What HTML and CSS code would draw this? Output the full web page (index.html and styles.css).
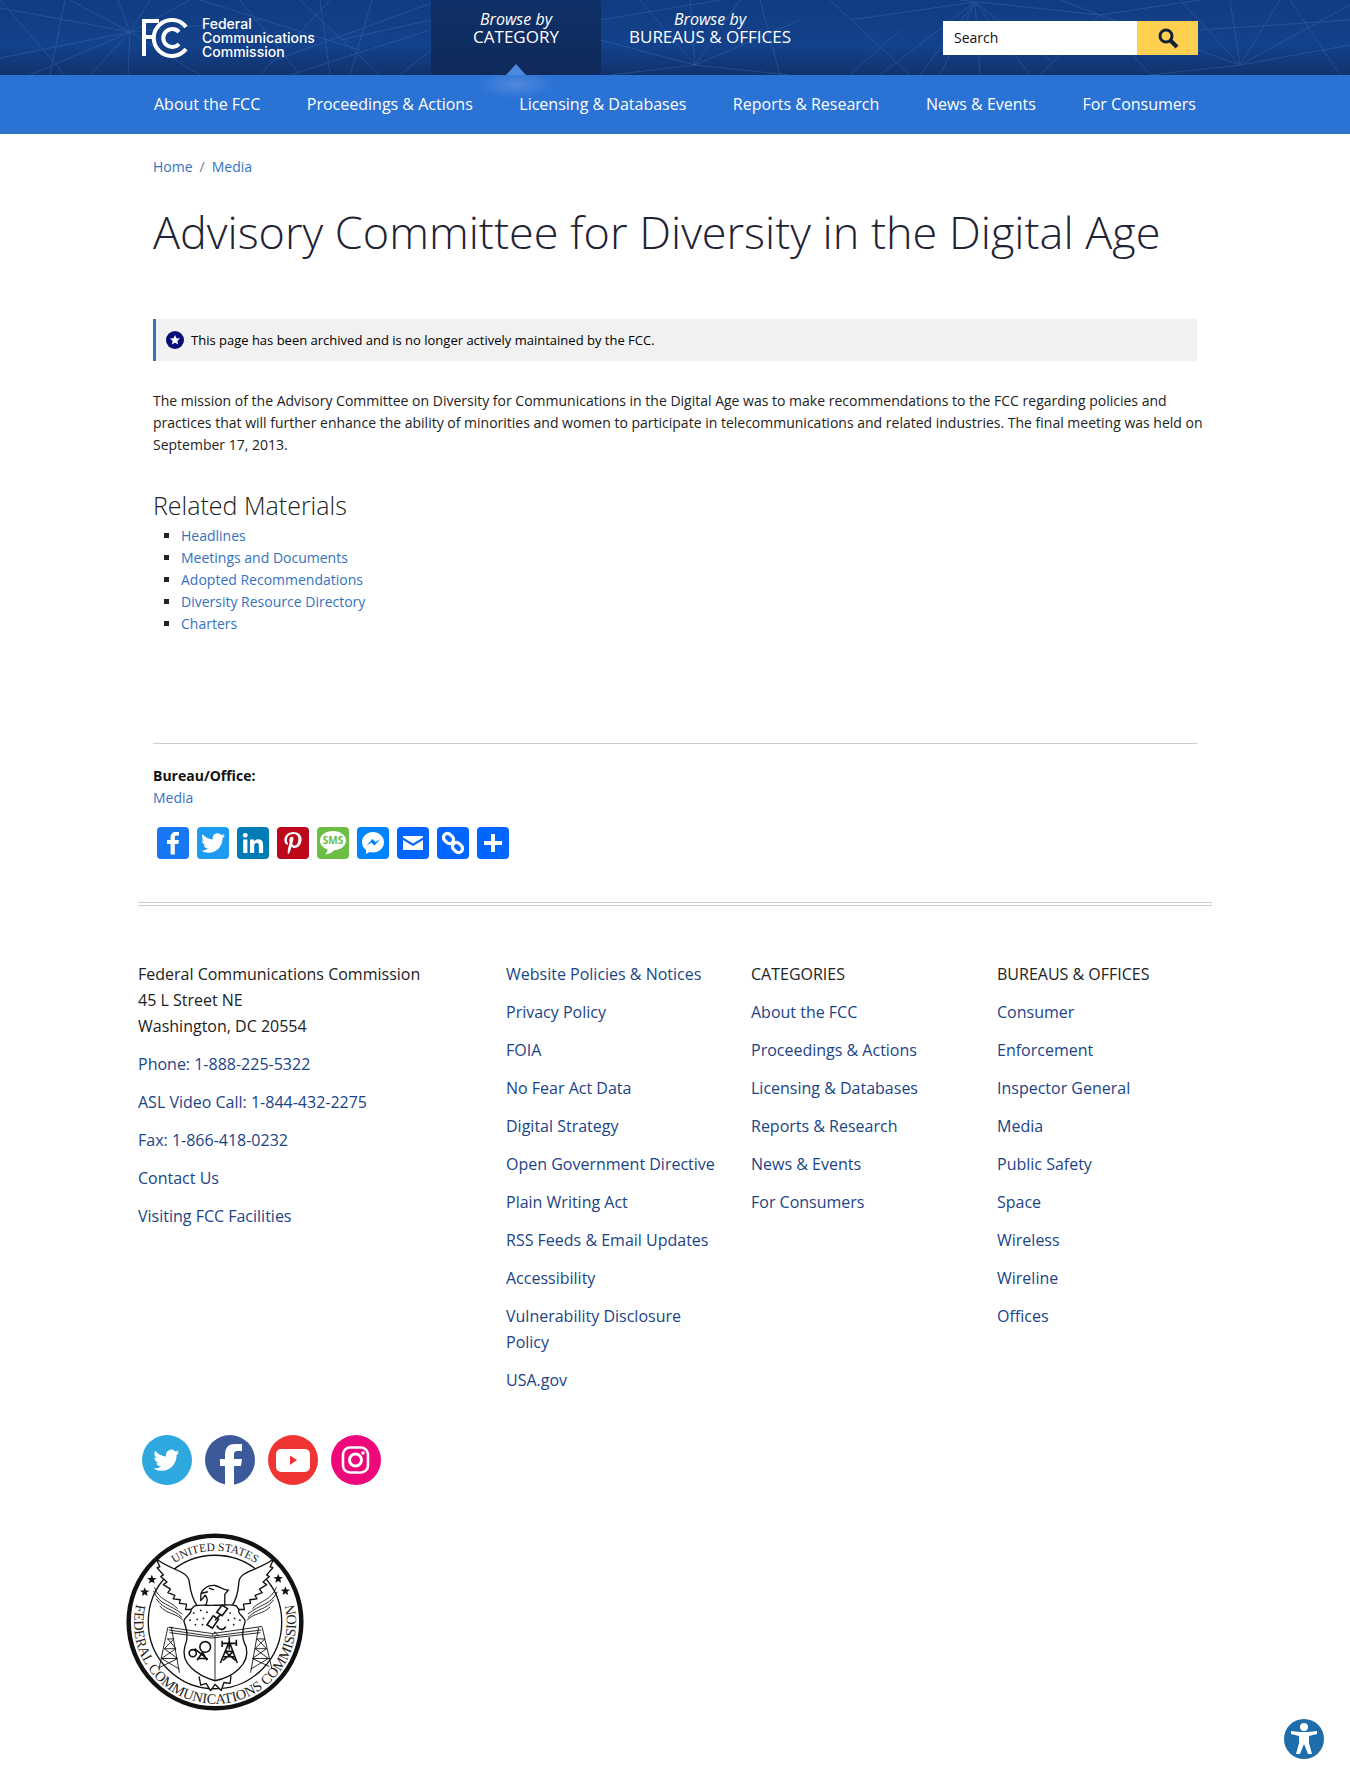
FILE: index.html
```html
<!DOCTYPE html>
<html lang="en">
<head>
<meta charset="utf-8">
<meta name="viewport" content="width=device-width, initial-scale=1">
<title>Advisory Committee for Diversity in the Digital Age | Federal Communications Commission</title>
<link rel="stylesheet" href="styles.css">
</head>
<body>
<header class="masthead">
  <svg class="masthead-pattern" viewBox="0 0 1350 75" preserveAspectRatio="xMidYMid slice" aria-hidden="true">
    <g fill="none" stroke="#5f93d6" stroke-width="1" opacity=".24">
      <path d="M130 32L0 8M130 32L0 58M130 32L30 75M130 32L90 75M130 32L128 75M130 32L70 0M130 32L118 0M130 32L150 0M130 32L200 75M130 32L260 20M130 32L190 0M0 0L65 75M65 0L50 75"/>
      <path d="M260 75L330 0M290 75L430 30M300 0L380 75M200 0L360 50M330 75L320 0M350 75L372 0M340 40L431 20M270 62L440 0M240 0L300 75M400 75L431 50"/>
      <path d="M695 65L610 75M695 65L600 40M695 65L640 0M695 65L690 0M695 65L740 0M695 65L800 20M695 65L790 75M975 2L880 75M975 2L920 75M975 2L940 75M975 2L980 75M975 2L1030 75M975 2L1050 60M975 2L850 20M600 20L720 0M760 0L780 75M830 0L910 75M900 30L850 75"/>
      <path d="M1100 15L1040 75M1100 15L1060 0M1100 15L1150 75M1100 15L1200 0M1100 15L1240 65M1100 15L960 0M1240 65L1180 0M1240 65L1230 0M1240 65L1280 0M1240 65L1350 5M1240 65L1350 45M1240 65L1150 75M1290 0L1340 75M1200 30L1350 20"/>
    </g>
  </svg>
  <div class="wrap masthead-row">
    <a class="logo" href="#" aria-label="Federal Communications Commission home">
      <svg class="logo-mark" viewBox="0 0 46 40" aria-hidden="true">
        <g fill="none" stroke="#fff" stroke-width="4">
          <path d="M2 38V3H17M2 19H12"/>
          <path d="M44 9A18 18 0 1 0 44 31"/>
          <path d="M37 14A9 9 0 1 0 37 26"/>
        </g>
      </svg>
      <span class="logo-text">Federal<br>Communications<br>Commission</span>
    </a>
    <div class="browse">
      <a class="browse-item browse-active" href="#"><em>Browse by</em><span>CATEGORY</span></a>
      <a class="browse-item" href="#"><em>Browse by</em><span>BUREAUS &amp; OFFICES</span></a>
    </div>
    <form class="search" role="search">
      <input class="search-input" type="text" placeholder="Search" aria-label="Search">
      <button class="search-button" type="button" aria-label="Submit search">
        <svg width="22" height="22" viewBox="0 0 22 22" aria-hidden="true"><circle cx="9" cy="9" r="6" fill="none" stroke="#14203a" stroke-width="3"/><path d="M13 13L20 20" stroke="#14203a" stroke-width="4"/></svg>
      </button>
    </form>
  </div>
</header>
<nav class="mainnav" aria-label="Main">
  <div class="wrap mainnav-row">
    <a href="#">About the FCC</a>
    <a href="#">Proceedings &amp; Actions</a>
    <a href="#">Licensing &amp; Databases</a>
    <a href="#">Reports &amp; Research</a>
    <a href="#">News &amp; Events</a>
    <a href="#">For Consumers</a>
  </div>
</nav>
<main class="wrap page">
  <div class="breadcrumb"><a href="#">Home</a><span>/</span><a href="#">Media</a></div>
  <h1>Advisory Committee for Diversity in the Digital Age</h1>
  <div class="notice">
    <svg width="18" height="18" viewBox="0 0 18 18" aria-hidden="true"><circle cx="9" cy="9" r="9" fill="#0b0b78"/><path d="M9 4L10.5 7.2L14 7.6L11.4 10L12.1 13.5L9 11.7L5.900 13.5L6.600 10L4 7.600L7.500 7.200Z" fill="#fff"/></svg>
    <span>This page has been archived and is no longer actively maintained by the FCC.</span>
  </div>
  <p class="mission">The mission of the Advisory Committee on Diversity for Communications in the Digital Age was to make recommendations to the FCC regarding policies and practices that will further enhance the ability of minorities and women to participate in telecommunications and related industries. The final meeting was held on September 17, 2013.</p>
  <h2>Related Materials</h2>
  <ul class="materials">
    <li><a href="#">Headlines</a></li>
    <li><a href="#">Meetings and Documents</a></li>
    <li><a href="#">Adopted Recommendations</a></li>
    <li><a href="#">Diversity Resource Directory</a></li>
    <li><a href="#">Charters</a></li>
  </ul>
  <section class="bureau">
    <strong>Bureau/Office:</strong>
    <a href="#">Media</a>
  </section>
  <div class="share">
    <a class="share-facebook" href="#" aria-label="Facebook"><svg viewBox="0 0 32 32"><path fill="#fff" d="M17.800 27.500V17h3.600l.500-4h-4.100v-2.500c0-1.200.300-2 2-2H22V5.100c-.400-.100-1.700-.200-3.200-.200-3.100 0-5.200 1.900-5.200 5.400V13H10v4h3.600v10.500z"/></svg></a>
    <a class="share-twitter" href="#" aria-label="Twitter"><svg viewBox="0 0 32 32"><path id="bird" fill="#fff" d="M28 8.600a9.900 9.900 0 0 1-2.800.800 4.900 4.900 0 0 0 2.200-2.700c-1 .500-2 1-3.100 1.200a4.900 4.900 0 0 0-8.400 4.500A14 14 0 0 1 5.700 7.200a4.900 4.900 0 0 0 1.500 6.600c-.800 0-1.600-.300-2.200-.600v.100a4.900 4.900 0 0 0 4 4.800 4.900 4.900 0 0 1-2.300.100 4.900 4.900 0 0 0 4.600 3.400A9.900 9.900 0 0 1 4 23.600a14 14 0 0 0 7.500 2.200c9.100 0 14-7.500 14-14v-.600A10 10 0 0 0 28 8.600z"/></svg></a>
    <a class="share-linkedin" href="#" aria-label="LinkedIn"><svg viewBox="0 0 32 32"><path fill="#fff" d="M6.200 12.600h4.200v13.500H6.200zM8.300 5.900a2.400 2.400 0 1 1 0 4.900 2.400 2.400 0 0 1 0-4.900M13 12.600h4v1.800h.100c.600-1 1.900-2.200 4-2.200 4.200 0 5 2.800 5 6.500v7.400h-4.200v-6.600c0-1.600 0-3.600-2.200-3.600s-2.500 1.700-2.500 3.500v6.700H13z"/></svg></a>
    <a class="share-pinterest" href="#" aria-label="Pinterest"><svg viewBox="0 0 32 32"><path fill="#fff" d="M16.500 5C10.500 5 7.400 9.300 7.400 12.900c0 2.200.800 4.100 2.600 4.900.300.100.600 0 .700-.300l.200-1c.100-.400.100-.500-.200-.800-.500-.600-.800-1.400-.800-2.500 0-3.200 2.400-6.100 6.200-6.100 3.400 0 5.300 2.100 5.300 4.800 0 3.600-1.600 6.700-4 6.700-1.300 0-2.300-1.100-2-2.400.400-1.600 1.100-3.300 1.100-4.500 0-1-.600-1.900-1.700-1.900-1.400 0-2.500 1.400-2.500 3.300 0 1.200.4 2 .4 2L11 22c-.500 2.100-.100 4.700 0 5 0 .100.200.200.300.100.100-.200 1.800-2.200 2.300-4.200l.9-3.500c.500.800 1.800 1.600 3.100 1.600 4.200 0 7-3.800 7-8.900C24.600 8.200 21.300 5 16.500 5z"/></svg></a>
    <a class="share-sms" href="#" aria-label="SMS"><svg viewBox="0 0 32 32"><path fill="#fff" d="M16 4c7.200 0 13 4 13 9.500S23.500 23 17 23.200c-2 2.500-5 4-9 4.300 1.500-1.500 2.500-3 2.500-5C6 21 3 17.500 3 13.500 3 8 8.800 4 16 4z"/><text x="16" y="17" text-anchor="middle" class="sms-label">SMS</text></svg></a>
    <a class="share-messenger" href="#" aria-label="Messenger"><svg viewBox="0 0 32 32"><path fill="#fff" d="M16 5C9.900 5 5 9.500 5 15.200c0 3.200 1.600 6 4 7.800V27l3.700-2c1 .300 2.100.400 3.300.400 6.100 0 11-4.500 11-10.200S22.100 5 16 5z"/><path fill="#0084ff" d="M9.500 18.500l6-6.500 3 3 5-3-6 6.500-3-3z"/></svg></a>
    <a class="share-blue" href="#" aria-label="Email"><svg viewBox="0 0 32 32"><path fill="#fff" d="M6 9h20v1.500l-10 6-10-6zM6 13l10 6 10-6v10H6z"/></svg></a>
    <a class="share-blue" href="#" aria-label="Copy Link"><svg viewBox="0 0 32 32"><g fill="none" stroke="#fff" stroke-width="3.200" stroke-linecap="round"><rect x="-5.500" y="-4" width="11" height="8" rx="4" transform="translate(11.500 11.500) rotate(45)"/><rect x="-5.500" y="-4" width="11" height="8" rx="4" transform="translate(20.500 20.500) rotate(45)"/></g></svg></a>
    <a class="share-blue" href="#" aria-label="Share"><svg viewBox="0 0 32 32"><path fill="#fff" d="M14 7h4v7h7v4h-7v7h-4v-7H7v-4h7z"/></svg></a>
  </div>
</main>
<footer class="wrap footer">
  <div class="footer-columns">
    <div class="footer-list">
      <address>Federal Communications Commission<br>45 L Street NE<br>Washington, DC 20554</address>
      <a href="#">Phone: 1-888-225-5322</a>
      <a href="#">ASL Video Call: 1-844-432-2275</a>
      <a href="#">Fax: 1-866-418-0232</a>
      <a href="#">Contact Us</a>
      <a href="#">Visiting FCC Facilities</a>
    </div>
    <div class="footer-list">
      <a href="#">Website Policies &amp; Notices</a>
      <a href="#">Privacy Policy</a>
      <a href="#">FOIA</a>
      <a href="#">No Fear Act Data</a>
      <a href="#">Digital Strategy</a>
      <a href="#">Open Government Directive</a>
      <a href="#">Plain Writing Act</a>
      <a href="#">RSS Feeds &amp; Email Updates</a>
      <a href="#">Accessibility</a>
      <a href="#">Vulnerability Disclosure Policy</a>
      <a href="#">USA.gov</a>
    </div>
    <div class="footer-list">
      <span>CATEGORIES</span>
      <a href="#">About the FCC</a>
      <a href="#">Proceedings &amp; Actions</a>
      <a href="#">Licensing &amp; Databases</a>
      <a href="#">Reports &amp; Research</a>
      <a href="#">News &amp; Events</a>
      <a href="#">For Consumers</a>
    </div>
    <div class="footer-list">
      <span>BUREAUS &amp; OFFICES</span>
      <a href="#">Consumer</a>
      <a href="#">Enforcement</a>
      <a href="#">Inspector General</a>
      <a href="#">Media</a>
      <a href="#">Public Safety</a>
      <a href="#">Space</a>
      <a href="#">Wireless</a>
      <a href="#">Wireline</a>
      <a href="#">Offices</a>
    </div>
  </div>
  <div class="social">
    <a href="#" aria-label="Twitter"><svg viewBox="0 0 50 50"><circle cx="25" cy="25" r="25" fill="#2fa8df"/><use href="#bird" transform="translate(7 8) scale(1.080)"/></svg></a>
    <a href="#" aria-label="Facebook"><svg viewBox="0 0 50 50"><circle cx="25" cy="25" r="25" fill="#3c5a9a"/><path fill="#fff" d="M20 50V31h-5v-7h5v-4c0-8 4-11 10-11h7v7h-4c-3 0-4 1-4 4v4h8l-1 7h-7v19z"/></svg></a>
    <a href="#" aria-label="YouTube"><svg viewBox="0 0 50 50"><circle cx="25" cy="25" r="25" fill="#f03434"/><rect x="8" y="14" width="34" height="23" rx="5" fill="#fff"/><path fill="#f03434" d="M22 20.500L29 25L22 30z"/></svg></a>
    <a href="#" aria-label="Instagram"><svg viewBox="0 0 50 50"><circle cx="25" cy="25" r="25" fill="#ee077b"/><g fill="none" stroke="#fff" stroke-width="2.600"><rect x="12" y="12.500" width="25" height="25" rx="7"/><circle cx="24.500" cy="25" r="6" stroke-width="3"/></g><circle cx="32" cy="18" r="1.800" fill="#fff"/></svg></a>
  </div>
  <svg class="seal" viewBox="0 0 200 200" role="img" aria-label="Seal of the Federal Communications Commission">
    <defs>
      <path id="arc-top" d="M20 100A80 80 0 0 1 180 100"/>
      <path id="arc-bottom" d="M16 66A91 91 0 1 0 184 66"/>
    </defs>
    <g fill="none" stroke="#111">
      <circle cx="100" cy="100" r="97" stroke-width="5"/>
      <circle cx="100" cy="100" r="75" stroke-width="1.500"/>
    </g>
    <g class="seal-text">
      <text class="seal-top"><textPath href="#arc-top" startOffset="50%" text-anchor="middle">UNITED STATES</textPath></text>
      <text><textPath href="#arc-bottom" startOffset="50%" text-anchor="middle">FEDERAL COMMUNICATIONS COMMISSION</textPath></text>
    </g>
    <g fill="#111">
      <path d="M29 47l1.500 3.500 3.800.200-3 2.400 1 3.700-3.300-2-3.200 2 1-3.700-3-2.400 3.800-.200z"/>
      <path d="M21 61l1.500 3.500 3.800.200-3 2.400 1 3.700-3.300-2-3.200 2 1-3.700-3-2.400 3.800-.200z"/>
      <path d="M171 46l1.500 3.500 3.800.200-3 2.400 1 3.700-3.300-2-3.200 2 1-3.700-3-2.400 3.800-.200z"/>
      <path d="M179 60l1.500 3.500 3.800.200-3 2.400 1 3.700-3.300-2-3.200 2 1-3.700-3-2.400 3.800-.200z"/>
    </g>
    <g fill="#fff" stroke="#111" stroke-width="1.500" stroke-linejoin="round">
      <path d="M80 82C72 70 72 60 71 54C69 42 50 42 34 29L38 38L35 39L42 47L39 49L46 55L42 58L50 63L47 67L55 70L53 74L61 75L60 79L68 80L67 86L74 86Z"/>
      <path d="M119 82C127 70 126 60 127 54C129 42 150 42 166 29L162 38L165 39L158 47L161 49L154 55L158 58L150 63L153 67L145 70L147 74L139 75L140 79L132 80L133 86L126 86Z"/>
      <path d="M89 82C92 77 92 73 89 70L84 76V70C85 63 92 58 100 59C105 60 110 65 115 64L111 69V82"/>
      <path d="M84 68L92 66M93 62L99 64"/>
      <path d="M82 161L84 171L90 169L95 177L100 170L107 177L110 168L117 169L118 160"/>
      <path d="M77 82C84 80 92 82 100 81C109 82 117 79 124 82L127 86C124 90 133 94 134 99C131 108 129 117 135 128C140 148 119 162 100 166C79 160 61 146 66 128C71 116 68 108 65 99C66 94 75 90 73 86Z"/>
    </g>
    <g fill="none" stroke="#111" stroke-width="1">
      <path d="M32 61C37 76 48 75 58 85M31 65C37 81 50 80 63 91M34 74C43 87 52 84 63 95M38 82C47 92 55 89 64 98M169 61C163 76 152 75 142 85M170 66C163 81 150 80 137 91M166 75C157 87 148 84 137 95M162 83C153 92 145 89 136 98"/>
      <path d="M48 106L97 113L153 105M48 109L96 116L152 109M49 112L96 118L151 112M100 116V166M96 116l4-5 4 5"/>
      <path d="M47 106L37 153M51 106L60 157M48 106h5M46 119h8M43 130h13M40 141h18M47 119l9 11-16 11 20 12M54 119l-11 11 15 11-20 10M149 106L140 157M153 106L164 153M147 119h9M145 130h13M142 141h19M156 119l-11 11 15 11-20 12M147 119l11 11-16 11 19 9"/>
    </g>
    <g fill="none" stroke="#111" stroke-width="1.800">
      <path d="M91 103l7-10 6 4-7 10zM102 89l6-8 6 4-6 8zM100 98l6-6M102 104c2 5 8 6 10 1"/>
      <circle cx="75" cy="135" r="4"/><circle cx="89" cy="128" r="6"/><path d="M77 130l15 12M86 134l-6 9M86 134l5 9M80 141h10"/>
      <path d="M116 122l-10 24M116 122l9 24M109 139h14M111 133h10M108 124h16M108 121v7M124 120v7M116 117v14M109 143l12-10M123 143l-12-10"/>
    </g>
    <g fill="#111">
      <circle cx="76" cy="90" r="1"/><circle cx="84" cy="87" r="1"/><circle cx="91" cy="89" r="1"/><circle cx="72" cy="98" r="1"/><circle cx="80" cy="97" r="1"/><circle cx="87" cy="96" r="1"/><circle cx="78" cy="103" r="1"/><circle cx="86" cy="103" r="1"/><circle cx="117" cy="90" r="1"/><circle cx="122" cy="96" r="1"/><circle cx="115" cy="98" r="1"/><circle cx="128" cy="98" r="1"/><circle cx="121" cy="103" r="1"/>
    </g>
  </svg>
</footer>
<button class="accessibility" type="button" aria-label="Accessibility options">
  <svg viewBox="0 0 40 40" aria-hidden="true"><circle cx="20" cy="20" r="20" fill="#1d6cab"/><circle cx="20" cy="8" r="4" fill="#fff"/><path fill="#fff" d="M7 12l9 1h8l9-1v3l-8 2v7l3 11h-4l-4-10-4 10h-4l3-11v-7l-8-2z"/></svg>
</button>
</body>
</html>
```

FILE: styles.css
```css
* { box-sizing: border-box; }
body {
  margin: 0;
  background: #fff;
  color: #222;
  font-family: "Open Sans", "Noto Sans", sans-serif;
  font-size: 14px;
  line-height: 22px;
}
a { color: #3472bf; text-decoration: none; }
svg { display: block; }
.wrap { max-width: 1074px; margin: 0 auto; }

.masthead {
  position: relative;
  background: linear-gradient(#123c80, #13418b 60%, #10336d);
}
.masthead-pattern { position: absolute; inset: 0; width: 100%; height: 100%; }
.masthead-row { position: relative; display: flex; min-height: 75px; }
.logo { display: flex; align-items: center; gap: 14px; width: 293px; padding-left: 4px; color: #fff; }
.logo-mark { width: 46px; height: 40px; }
.logo-text { font-family: Inter, sans-serif; font-size: 14px; line-height: 14px; font-weight: 500; }
.browse { display: flex; flex: 1; }
.browse-item {
  position: relative;
  display: flex;
  flex-direction: column;
  align-items: center;
  min-width: 170px;
  padding: 10px 28px 0;
  color: #fff;
  font-size: 17px;
  line-height: 18px;
}
.browse-item em { font-size: 16px; }
.browse-active { background: linear-gradient(#103068, #0f2a5a); }
.browse-active::before {
  content: "";
  position: absolute;
  top: 75px;
  left: 50%;
  z-index: 1;
  width: 80px;
  height: 24px;
  margin-left: -40px;
  background: radial-gradient(ellipse at 50% 40%, #5088de, #5088de00 70%);
}
.browse-active::after {
  content: "";
  position: absolute;
  bottom: 0;
  left: 50%;
  margin-left: -10px;
  border: 10px solid transparent;
  border-top: 0;
  border-bottom: 11px solid #4e89e0;
}
.search { display: flex; width: 255px; height: 34px; margin: 21px 14px 0 0; }
.search-input {
  flex: 1;
  min-width: 0;
  border: 0;
  border-radius: 0;
  padding: 0 11px;
  background: #fff;
  font: inherit;
}
.search-input::placeholder { color: #111; opacity: 1; }
.search-button {
  display: flex;
  align-items: center;
  justify-content: center;
  width: 61px;
  border: 0;
  padding: 0;
  background: #ffd04f;
}
.mainnav { background: #2a72d4; border-bottom: 3px solid #306fc6; }
.mainnav-row {
  display: flex;
  flex-wrap: wrap;
  justify-content: space-between;
  padding: 16px 16px 14px;
  font-size: 16px;
  line-height: 26px;
}
.mainnav-row a { position: relative; z-index: 2; color: #fff; }

.page { padding: 22px 15px 43px; }
.breadcrumb { display: flex; gap: 7px; color: #777; }
h1 {
  margin: 24px 0 57px;
  color: #1f2333;
  font-size: 45px;
  font-weight: 300;
  line-height: 60px;
}
.notice {
  display: flex;
  align-items: center;
  gap: 7px;
  border-left: 3px solid #3472bf;
  padding: 10px;
  background: #f1f1f1;
  color: #000;
  font-size: 13px;
}
.mission { margin: 29px -8px 33px 0; }
h2 { margin: 0; color: #222; font-size: 25px; font-weight: 300; line-height: 32px; }
.materials { margin: 4px 0 0; padding-left: 28px; list-style: square; }
.bureau {
  display: flex;
  flex-direction: column;
  align-items: flex-start;
  margin-top: 108px;
  border-top: 1px solid #ccc;
  padding-top: 21px;
}
.bureau strong { color: #111; }
.share { display: flex; gap: 8px; padding: 18px 4px 0; }
.share a { width: 32px; border-radius: 4px; }
.share-facebook { background: #1877f2; }
.share-twitter { background: #1d9bf0; }
.share-linkedin { background: #007bb5; }
.share-pinterest { background: #bd081c; }
.share-sms { background: #6cbe45; }
.share-messenger { background: #0084ff; }
.share-blue { background: #0166ff; }
.sms-label { fill: #6cbe45; font-size: 10px; font-weight: 700; }

.footer { border-top: 4px double #ccc; padding: 55px 0 80px; font-size: 16px; line-height: 26px; }
.footer-columns { display: grid; grid-template-columns: 368fr 245fr 246fr 215fr; }
.footer-list { display: flex; flex-direction: column; align-items: flex-start; gap: 12px; padding-right: 30px; }
.footer-list a { color: #1b4486; }
.footer-list address { font-style: normal; }
.social { display: flex; gap: 13px; padding: 42px 4px 0; }
.social a { width: 50px; }
.seal { width: 178px; margin: 48px 0 0 -12px; }
.seal-text { fill: #222; font-family: "Liberation Serif", serif; font-size: 16px; }
.seal-top { font-size: 13px; }
.accessibility {
  position: fixed;
  right: 26px;
  bottom: 31px;
  width: 40px;
  height: 40px;
  border: 0;
  padding: 0;
  background: none;
}
```
